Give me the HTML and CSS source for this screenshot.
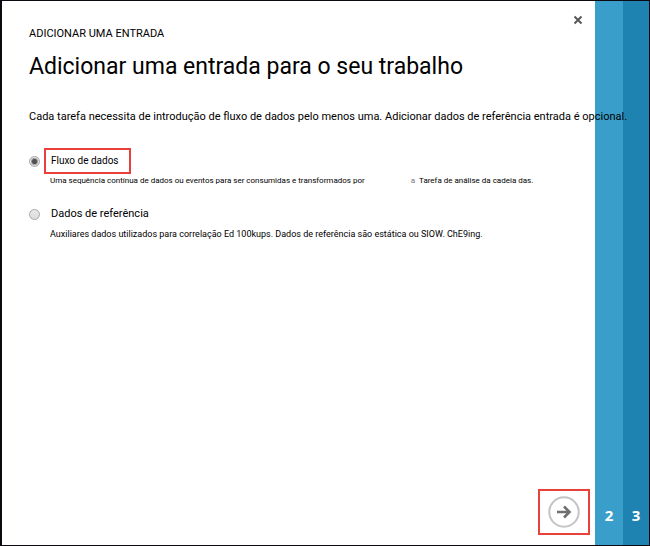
FILE: index.html
```html
<!DOCTYPE html>
<html lang="pt">
<head>
<meta charset="utf-8">
<title>Adicionar uma entrada</title>
<link rel="stylesheet" href="styles.css">
</head>
<body>
<div class="wizard">
  <main class="panel">
    <button class="close" type="button" aria-label="Fechar">
      <svg width="10" height="10" viewBox="0 0 10 10"><path d="M1.5 1.5 8.5 8.5M8.5 1.5 1.5 8.5"/></svg>
    </button>
    <p class="eyebrow">ADICIONAR UMA ENTRADA</p>
    <h1 class="title">Adicionar uma entrada para o seu trabalho</h1>
    <p class="intro">Cada tarefa necessita de introdução de fluxo de dados pelo menos uma. Adicionar dados de referência entrada é opcional.</p>
    <form class="options" id="input-type">
      <div class="option">
        <input class="radio" type="radio" name="kind" id="stream" checked>
        <label class="name name-marked" for="stream">Fluxo de dados</label>
        <p class="hint hint-split">
          <span>Uma sequência contínua de dados ou eventos para ser consumidas e transformados por</span>
          <span class="hint-tail"><span class="faint">a</span> <span>Tarefa de análise da cadeia das.</span></span>
        </p>
      </div>
      <div class="option">
        <input class="radio" type="radio" name="kind" id="reference">
        <label class="name name-large" for="reference">Dados de referência</label>
        <p class="hint hint-large">Auxiliares dados utilizados para correlação Ed 100kups. Dados de referência são estática ou SIOW. ChE9ing.</p>
      </div>
    </form>
    <div class="actions">
      <div class="marker">
        <button class="next" type="submit" form="input-type" aria-label="Seguinte">
          <svg width="32" height="32" viewBox="0 0 32 32"><circle cx="16" cy="16" r="14.7"/><path d="M9 16H21M16 10.5 21.5 16 16 21.5"/></svg>
        </button>
      </div>
    </div>
  </main>
  <button class="step step-two" type="button">2</button>
  <button class="step step-three" type="button">3</button>
</div>
</body>
</html>
```
FILE: styles.css
```css
* {
  box-sizing: border-box;
}

body {
  margin: 0;
  font-family: Roboto, "Liberation Sans", sans-serif;
  color: #000;
  background: #fff;
}

h1,
p {
  margin: 0;
  font-weight: 400;
}

button {
  padding: 0;
  border: 0;
  background: none;
  font-family: inherit;
  cursor: pointer;
}

svg {
  display: block;
  fill: none;
}

.wizard {
  display: grid;
  grid-template-columns: 1fr 28px 26px;
  min-height: 100vh;
  border: 1px solid #0c0a10;
  border-left-width: 2px;
}

.panel {
  position: relative;
  z-index: 1;
  display: flex;
  flex-direction: column;
  min-width: 0;
  padding: 24px 5px 10px 27px;
}

.close {
  position: absolute;
  top: 14px;
  right: 12px;
}

.close path {
  stroke: #58585a;
  stroke-width: 2;
}

.eyebrow {
  font-size: 11px;
  line-height: 18px;
}

.title {
  margin-top: 8px;
  font-size: 23px;
  line-height: 32px;
}

.intro {
  margin-top: 26px;
  font-size: 11px;
  line-height: 16px;
  white-space: nowrap;
}

.options {
  display: grid;
  gap: 15px;
  margin-top: 23px;
}

.option {
  display: grid;
  grid-template-columns: 15px 1fr;
  align-items: center;
  justify-items: start;
}

.radio {
  appearance: none;
  width: 11px;
  height: 11px;
  margin: 0;
  border: 1px solid #a8a8a8;
  border-radius: 50%;
  background: linear-gradient(#e8e8e8, #dcdcdc);
}

.radio:checked {
  background: radial-gradient(circle, #505050 0 2px, #e2e2e2 4px);
}

.name {
  padding: 0 7px;
  font-size: 10px;
  line-height: 22px;
}

.name-marked {
  padding: 0 10px 0 5px;
  border: 2px solid #e8403a;
}

.name-large {
  font-size: 11px;
}

.hint {
  grid-column: 2;
  padding-left: 6px;
  font-size: 8px;
  line-height: 14px;
  white-space: nowrap;
}

.hint-split {
  display: flex;
  gap: 46px;
}

.hint-tail {
  display: flex;
  gap: 4px;
}

.faint {
  color: #777;
}

.hint-large {
  padding-top: 2px;
  font-size: 9px;
}

.actions {
  display: flex;
  justify-content: flex-end;
  margin-top: auto;
}

.marker {
  padding: 5px 8px;
  border: 2px solid #e8403a;
}

.next {
  display: block;
}

.next circle {
  stroke: #c4c4c4;
  stroke-width: 2;
}

.next path {
  stroke: #707070;
  stroke-width: 2.6;
}

.step {
  display: flex;
  align-items: flex-end;
  justify-content: center;
  padding-bottom: 20px;
  color: #fff;
  font-family: "Open Sans", sans-serif;
  font-size: 15px;
  font-weight: 700;
  line-height: 20px;
}

.step-two {
  background: #3a9eca;
}

.step-three {
  background: #1f83b1;
}
```
